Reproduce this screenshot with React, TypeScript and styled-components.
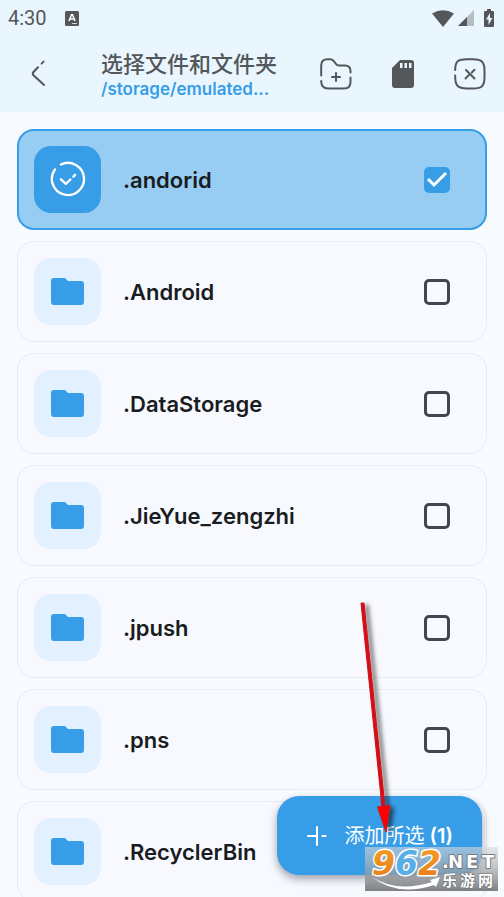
import React, { useState } from "react";
import styled, { createGlobalStyle } from "styled-components";

const blue = "#389de7";
const ink = "#53575a";

const GlobalStyle = createGlobalStyle`
  * { box-sizing: border-box; }
  body {
    margin: 0;
    background: #f7fbff;
    color: #191c20;
    font-family: Inter, "Noto Sans CJK SC", sans-serif;
  }
  button { font: inherit; border: 0; padding: 0; background: none; cursor: pointer; }
  svg { display: block; flex: none; }
`;

const Screen = styled.div`
  position: relative;
  display: flex;
  flex-direction: column;
  height: 100vh;
  overflow: hidden;
`;

const TopArea = styled.header`
  flex: none;
  background: #eaf6fe;
  color: ${ink};
`;

const StatusBar = styled.div`
  display: flex;
  align-items: center;
  gap: 18px;
  height: 36px;
  padding: 0 8px;
`;

const Clock = styled.span`
  font: 20px/24px Roboto, sans-serif;
`;

const StatusIcons = styled.div`
  display: flex;
  align-items: center;
  gap: 4px;
  margin-left: auto;
`;

const Toolbar = styled.div`
  display: flex;
  align-items: center;
  height: 76px;
  padding: 0 16px;
`;

const IconButton = styled.button`
  display: grid;
  place-items: center;
  flex: none;
  width: 36px;
  height: 36px;
  color: ${ink};
`;

const BackButton = styled(IconButton)`
  width: 44px;
`;

const Titles = styled.div`
  flex: 1;
  min-width: 0;
  padding: 2px 0 0 41px;
`;

const Title = styled.h1`
  margin: 0;
  font-family: "Noto Sans CJK SC", sans-serif;
  font-size: 22px;
  line-height: 28px;
  font-weight: 500;
  white-space: nowrap;
`;

const Path = styled.p`
  margin: 0;
  color: ${blue};
  font-size: 17px;
  line-height: 26px;
  font-weight: 600;
  white-space: nowrap;
`;

const Actions = styled.div`
  display: flex;
  gap: 31px;
`;

const List = styled.ul`
  flex: 1;
  display: flex;
  flex-direction: column;
  gap: 11px;
  margin: 0;
  padding: 17px;
  overflow: hidden;
  list-style: none;
`;

const Card = styled.label<{ $on: boolean }>`
  display: flex;
  align-items: center;
  height: 101px;
  padding: 0 ${(p) => (p.$on ? 35 : 36)}px 0 ${(p) => (p.$on ? 15 : 16)}px;
  border: ${(p) => (p.$on ? `2px solid ${blue}` : "1px solid #e9ebf1")};
  border-radius: 17px;
  background: ${(p) => (p.$on ? "#97cdf3" : "#f8f9ff")};
  cursor: pointer;
`;

const Tile = styled.span<{ $on: boolean }>`
  display: grid;
  place-items: center;
  flex: none;
  width: 67px;
  height: 67px;
  border-radius: 17px;
  background: ${(p) => (p.$on ? blue : "#e2f0ff")};
`;

const Name = styled.span`
  flex: 1;
  margin-left: 22px;
  font-size: 22px;
  line-height: 28px;
  font-weight: 600;
`;

const Check = styled.input`
  appearance: none;
  flex: none;
  width: 26px;
  height: 26px;
  margin: 0;
  border: 3px solid #41474d;
  border-radius: 5px;
  &:checked {
    border: 0;
    background: ${blue}
      url("data:image/svg+xml,%3Csvg xmlns='http://www.w3.org/2000/svg' viewBox='0 0 26 26'%3E%3Cpath d='M4 12l6 6L22 6' fill='none' stroke='white' stroke-width='3'/%3E%3C/svg%3E");
  }
`;

const AddButton = styled.button`
  position: absolute;
  right: 22px;
  bottom: 22px;
  && {
    display: flex;
    align-items: center;
    gap: 17px;
    height: 79px;
    padding: 0 29px;
    border-radius: 22px;
    background: ${blue};
    color: #fff;
    font-size: 20px;
    font-weight: 600;
    line-height: 28px;
    box-shadow: 0 4px 9px rgba(20, 30, 50, 0.4);
  }
`;

const AddText = styled.span`
  font-family: Inter, sans-serif;
  white-space: nowrap;
  & > span {
    font-family: "Noto Sans CJK SC", sans-serif;
    font-weight: 400;
  }
`;

const Arrow = styled.svg`
  position: absolute;
  right: 104px;
  bottom: 57px;
  pointer-events: none;
`;

const Stamp = styled.svg`
  position: absolute;
  right: 6px;
  bottom: 6px;
  overflow: visible;
  pointer-events: none;
`;

const names = [".andorid", ".Android", ".DataStorage", ".JieYue_zengzhi", ".jpush", ".pns", ".RecyclerBin"];

const FolderIcon = () => (
  <svg width="33" height="27" viewBox="0 0 33 27" fill={blue}>
    <path d="M3 0h11l3 3h13a3 3 0 0 1 3 3v18a3 3 0 0 1-3 3H3a3 3 0 0 1-3-3V3a3 3 0 0 1 3-3z" />
  </svg>
);

const DoneIcon = () => (
  <svg width="37" height="37" viewBox="0 0 38 38" fill="none" stroke="#fff" strokeWidth="2.4" strokeLinecap="round">
    <path d="M12.2 3.6A16.5 16.5 0 1 1 6.2 8.6" />
    <path d="M12.3 18.8l5 4.7 4.7-4.5M25 16l1.8-1.8" strokeLinejoin="round" />
  </svg>
);

const BackIcon = () => (
  <svg width="16" height="28" viewBox="0 0 16 28" fill="none" stroke="currentColor" strokeWidth="2" strokeLinecap="round">
    <path d="M14 25L3.5 15.3Q2 13.8 3.5 12L8 7.2M11.6 3.6L13.6 1.6" />
  </svg>
);

const NewFolderIcon = () => (
  <svg width="32" height="32" viewBox="0 0 32 32" fill="none" stroke="currentColor" strokeWidth="2" strokeLinecap="round">
    <path d="M1.2 17.5V7.5Q1.2 1.2 7.5 1.2H10Q12 1.2 13.2 2.5L16 6Q17 7.5 19 7.5H25Q30.5 7.5 30.5 13V14.5M30.5 19.5V24Q30.5 30.5 24 30.5H8Q1.2 30.5 1.2 23M16 15v8M12 19h8" />
  </svg>
);

const CardIcon = () => (
  <svg width="24" height="30" viewBox="0 0 24 30" fill="currentColor">
    <path
      fillRule="evenodd"
      d="M9 1h11a3 3 0 0 1 3 3v22a3 3 0 0 1-3 3H4a3 3 0 0 1-3-3V9zM9 4v5h2.500V4zm4.500 0v5h2.500V4zm4.500 0v5h2.500V4z"
    />
  </svg>
);

const CloseBoxIcon = () => (
  <svg width="32" height="32" viewBox="0 0 32 32" fill="none" stroke="currentColor" strokeWidth="2" strokeLinecap="round">
    <path d="M1.2 12C1.2 3 4 1.2 13 1.2H19C28 1.2 30.5 4 30.5 13V19C30.5 28 28 30.5 19 30.5H13C4 30.5 1.2 28 1.2 18.5V17.5" />
    <path d="M12 12l8.5 8.5M11.5 20.5l3.2-3.2M17.8 14.5l2.7-2.7" />
  </svg>
);

export default function App() {
  const [selected, setSelected] = useState<string[]>([".andorid"]);
  const toggle = (name: string) =>
    setSelected((s) => (s.includes(name) ? s.filter((n) => n !== name) : [...s, name]));

  return (
    <>
      <GlobalStyle />
      <Screen>
        <TopArea>
          <StatusBar>
            <Clock>4:30</Clock>
            <svg width="14" height="15" viewBox="0 0 14 15">
              <rect width="14" height="15" rx="1.5" fill={ink} />
              <path d="M4 10L6.5 3.8H7.5L10 10M5 8h4" fill="none" stroke="#fff" strokeWidth="1.5" />
              <path d="M7 12.5h5" stroke="#cfd5d9" />
            </svg>
            <StatusIcons>
              <svg width="22" height="17" viewBox="0 0 22 17" fill={ink}>
                <path d="M0 3.5Q11-3 22 3.5L11 17z" />
              </svg>
              <svg width="16" height="16" viewBox="0 0 16 16">
                <path d="M0 16L16 0V16z" fill="#b5bdc3" />
                <path d="M0 16L9 7V16z" fill={ink} />
              </svg>
              <svg width="18" height="18" viewBox="0 0 18 18">
                <path d="M9 0h4v2h2q1 0 1 1v14q0 1-1 1H7q-1 0-1-1V3q0-1 1-1h2z" fill={ink} />
                <path d="M12 4l-4 6.5h2.5V16l4-7H12z" fill="#eaf6fe" />
              </svg>
            </StatusIcons>
          </StatusBar>
          <Toolbar>
            <BackButton aria-label="返回"><BackIcon /></BackButton>
            <Titles>
              <Title>选择文件和文件夹</Title>
              <Path>/storage/emulated...</Path>
            </Titles>
            <Actions>
              <IconButton aria-label="新建文件夹"><NewFolderIcon /></IconButton>
              <IconButton aria-label="存储卡"><CardIcon /></IconButton>
              <IconButton aria-label="关闭"><CloseBoxIcon /></IconButton>
            </Actions>
          </Toolbar>
        </TopArea>

        <List>
          {names.map((name) => {
            const on = selected.includes(name);
            return (
              <li key={name}>
                <Card $on={on}>
                  <Tile $on={on}>{on ? <DoneIcon /> : <FolderIcon />}</Tile>
                  <Name>{name}</Name>
                  <Check type="checkbox" checked={on} onChange={() => toggle(name)} />
                </Card>
              </li>
            );
          })}
        </List>

        <AddButton>
          <svg width="22" height="22" viewBox="0 0 22 22" fill="none" stroke="#fff" strokeWidth="2" strokeLinecap="round">
            <path d="M11 2v18M2 11h8M16.5 11h3" />
          </svg>
          <AddText>
            <span>添加所选</span> ({selected.length})
          </AddText>
        </AddButton>

        <Arrow width="48" height="240" viewBox="0 0 48 240">
          <defs>
            <filter id="arrowShadow" x="-50%" y="-5%" width="220%" height="110%">
              <feDropShadow dx="4" dy="2" stdDeviation="2" floodColor="#000" floodOpacity="0.55" />
            </filter>
          </defs>
          <g filter="url(#arrowShadow)">
            <path d="M9 3L12 3L33 207H30z" fill="#d40f16" stroke="#d40f16" />
            <path d="M25.5 207L38 205.5L34 232z" fill="#fb0505" stroke="#d40f16" />
          </g>
        </Arrow>

        <Stamp width="133" height="44" viewBox="0 0 133 44">
          <defs>
            <linearGradient id="stampBg" x1="0" y1="0" x2="0" y2="1">
              <stop offset="0" stopColor="#d8dadc" stopOpacity="0.6" />
              <stop offset="0.5" stopColor="#a4a7aa" stopOpacity="0.7" />
              <stop offset="1" stopColor="#707274" stopOpacity="0.9" />
            </linearGradient>
            <linearGradient id="orange" x1="0" y1="0" x2="0" y2="1">
              <stop offset="0" stopColor="#f5a024" />
              <stop offset="1" stopColor="#e67a1a" />
            </linearGradient>
          </defs>
          <rect width="133" height="44" fill="url(#stampBg)" />
          <path d="M7 30Q32 46 67 35L65 33L75 30L71 40L69 38Q32 50 7 30z" fill="#fff" />
          <g
            fontFamily="DejaVu Sans, sans-serif"
            fontWeight="700"
            stroke="#fff"
            strokeLinejoin="round"
            paintOrder="stroke"
          >
            <g fontSize="33" fontStyle="italic" strokeWidth="3">
              <text x="7" y="28" fill="url(#orange)">9</text>
              <text x="30" y="28" fill="#58aee6">6</text>
              <text x="53" y="28" fill="url(#orange)">2</text>
            </g>
            <g fontSize="18" fill="#fff" stroke="#777b80" strokeWidth="2">
              <text x="77" y="21">.</text>
              <text x="83" y="21">N</text>
              <text x="101" y="21">E</text>
              <text x="117" y="21">T</text>
            </g>
          </g>
          <g
            fontFamily="Noto Sans CJK SC, sans-serif"
            fontWeight="700"
            fontSize="15"
            fill="#fff"
            stroke="#6c6f72"
            strokeWidth="1"
            paintOrder="stroke"
          >
            <text x="77" y="39">乐</text>
            <text x="95" y="39">游</text>
            <text x="113" y="39">网</text>
          </g>
        </Stamp>
      </Screen>
    </>
  );
}
